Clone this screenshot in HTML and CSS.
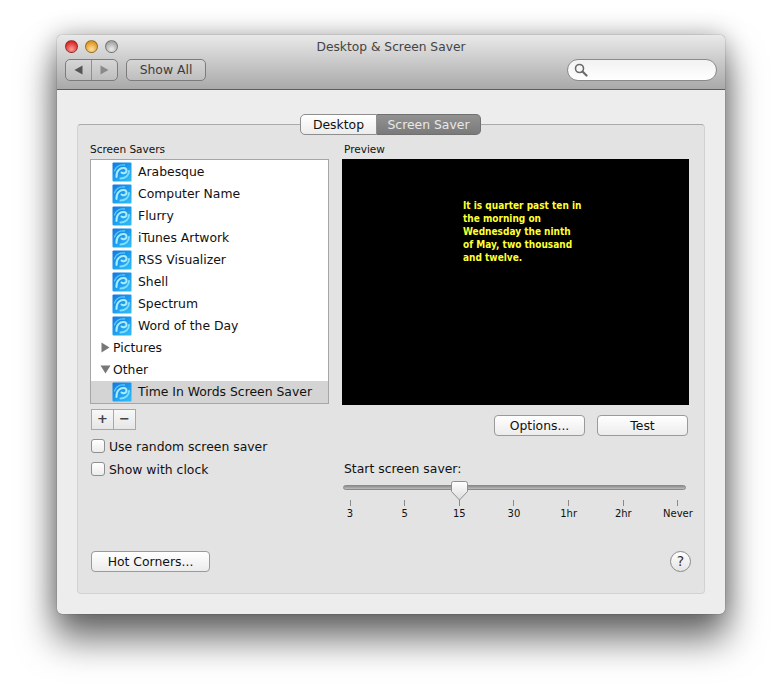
FILE: index.html
```html
<!DOCTYPE html>
<html>
<head>
  <meta name="viewport" content="width=device-width, initial-scale=1">
  <title>Desktop &amp; Screen Saver</title>
  <link rel="stylesheet" href="styles.css">
</head>
<body>
  <svg class="defs" width="0" height="0">
    <defs>
      <linearGradient id="iconBg" x1="0" y1="0" x2="0.8" y2="1">
        <stop offset="0" stop-color="#1478e0"/>
        <stop offset="0.5" stop-color="#1a98ee"/>
        <stop offset="1" stop-color="#30b8f6"/>
      </linearGradient>
      <symbol id="saver" viewBox="0 0 20 20">
        <rect x="0.500" y="0.500" width="19" height="19" rx="1" fill="url(#iconBg)"/>
        <path d="M4.500 15C4 9 8 5.500 12 6C15 6.400 15.500 10 12.500 11C11 11.500 10 11 9.500 10.500" fill="none" stroke="#a8ecff" stroke-width="2" stroke-linecap="round"/>
        <path d="M17 9C17 13.500 13 16.500 8.500 16.500" fill="none" stroke="#7fdffc" stroke-width="2" stroke-linecap="round"/>
        <path d="M2.500 9C4 4.500 8 2.500 12.500 3" fill="none" stroke="#5cc8f8" stroke-width="1.300" stroke-linecap="round"/>
      </symbol>
    </defs>
  </svg>

  <div class="window">
    <div class="titlebar">
      <div class="title-row">
        <div class="lights">
          <span class="light red"></span>
          <span class="light yellow"></span>
          <span class="light gray"></span>
        </div>
        <div class="title">Desktop &amp; Screen Saver</div>
      </div>
      <div class="toolbar">
        <div class="nav">
          <span class="nav-btn"><svg width="9" height="10" viewBox="0 0 9 10"><path d="M0.500 5L8.500 0.500V9.500Z" fill="#555"/></svg></span>
          <span class="nav-btn"><svg width="9" height="10" viewBox="0 0 9 10"><path d="M8.500 5L0.500 0.500V9.500Z" fill="#8a8a8a"/></svg></span>
        </div>
        <div class="show-all">Show All</div>
        <div class="search">
          <svg width="14" height="14" viewBox="0 0 14 14"><circle cx="5.500" cy="5.500" r="4" fill="none" stroke="#6a6a6a" stroke-width="1.600"/><path d="M8.500 8.500L12.500 12.500" stroke="#6a6a6a" stroke-width="2.200" stroke-linecap="round"/></svg>
        </div>
      </div>
    </div>

    <div class="content">
      <div class="panel">
        <div class="tabs">
          <div class="tab">Desktop</div>
          <div class="tab active">Screen Saver</div>
        </div>

        <div class="columns">
          <div class="left">
            <div class="small-label">Screen Savers</div>
            <ul class="list">
              <li class="row"><svg class="icon"><use href="#saver"/></svg>Arabesque</li>
              <li class="row"><svg class="icon"><use href="#saver"/></svg>Computer Name</li>
              <li class="row"><svg class="icon"><use href="#saver"/></svg>Flurry</li>
              <li class="row"><svg class="icon"><use href="#saver"/></svg>iTunes Artwork</li>
              <li class="row"><svg class="icon"><use href="#saver"/></svg>RSS Visualizer</li>
              <li class="row"><svg class="icon"><use href="#saver"/></svg>Shell</li>
              <li class="row"><svg class="icon"><use href="#saver"/></svg>Spectrum</li>
              <li class="row"><svg class="icon"><use href="#saver"/></svg>Word of the Day</li>
              <li class="row group"><svg class="arrow" width="9" height="11" viewBox="0 0 9 11"><path d="M0.500 0.500L8.500 5.500L0.500 10.500Z" fill="#777"/></svg>Pictures</li>
              <li class="row group"><svg class="arrow" width="11" height="9" viewBox="0 0 11 9"><path d="M0.500 0.500H10.500L5.500 8.500Z" fill="#777"/></svg>Other</li>
              <li class="row selected"><svg class="icon"><use href="#saver"/></svg>Time In Words Screen Saver</li>
            </ul>
            <div class="plus-minus">
              <span class="pm">+</span>
              <span class="pm">&minus;</span>
            </div>
            <label class="check first"><span class="box"></span>Use random screen saver</label>
            <label class="check"><span class="box"></span>Show with clock</label>
          </div>

          <div class="right">
            <div class="small-label preview-label">Preview</div>
            <div class="preview">
              <div class="words">It is quarter past ten in<br>the morning on<br>Wednesday the ninth<br>of May, two thousand<br>and twelve.</div>
            </div>
            <div class="actions">
              <div class="btn">Options...</div>
              <div class="btn">Test</div>
            </div>
            <div class="start-label">Start screen saver:</div>
            <div class="slider">
              <div class="track"></div>
              <svg class="thumb" width="17" height="20" viewBox="0 0 17 20">
                <defs><linearGradient id="thumbBg" x1="0" y1="0" x2="0" y2="1"><stop offset="0" stop-color="#fff"/><stop offset="1" stop-color="#dcdcdc"/></linearGradient></defs>
                <path d="M2.500 0.500H14.500Q16.500 0.500 16.500 2.500V10.500L8.500 19L0.500 10.500V2.500Q0.500 0.500 2.500 0.500Z" fill="url(#thumbBg)" stroke="#8f8f8f"/>
              </svg>
            </div>
            <div class="ticks">
              <div class="tick">3</div>
              <div class="tick">5</div>
              <div class="tick">15</div>
              <div class="tick">30</div>
              <div class="tick">1hr</div>
              <div class="tick">2hr</div>
              <div class="tick">Never</div>
            </div>
          </div>
        </div>

        <div class="footer">
          <div class="btn hot">Hot Corners...</div>
          <div class="help">?</div>
        </div>
      </div>
    </div>
  </div>
</body>
</html>
```

FILE: styles.css
```css
body {
  box-sizing: border-box;
  min-height: 693px;
  margin: 0;
  padding: 35px 0 0 57px;
  background: #fff;
  font-family: "DejaVu Sans", Verdana, sans-serif;
  font-size: 12.4px;
  color: #111;
}
.defs {
  position: absolute;
}
.window {
  box-sizing: border-box;
  width: 668px;
  height: 579px;
  border-radius: 5px;
  background: #ededed;
  box-shadow: 0 0 1px rgba(0,0,0,.7), 0 24px 36px 2px rgba(0,0,0,.55), 0 0 26px rgba(0,0,0,.28);
}

/* title bar */
.titlebar {
  box-sizing: border-box;
  height: 55px;
  padding: 0 8px;
  border-radius: 5px 5px 0 0;
  border-bottom: 1px solid #5e5e5e;
  background: linear-gradient(#e9e9e9, #a9a9a9);
}
.title-row {
  display: grid;
  grid-template-columns: 1fr auto 1fr;
  align-items: center;
  height: 23px;
}
.lights {
  display: flex;
  gap: 7px;
}
.light {
  width: 13px;
  height: 13px;
  border-radius: 50%;
  box-sizing: border-box;
  border: 1px solid rgba(0,0,0,.35);
}
.red { background: radial-gradient(circle at 50% 75%, #ff9a98, #d92f2c 70%); }
.yellow { background: radial-gradient(circle at 50% 75%, #ffe0a0, #e09a26 70%); }
.gray { background: radial-gradient(circle at 50% 75%, #ececec, #a8a8a8 70%); }
.title {
  font-size: 12.25px;
  color: #444;
}
.toolbar {
  display: flex;
  align-items: center;
  height: 22px;
  margin-top: 1px;
}
.nav {
  display: flex;
  box-sizing: border-box;
  width: 53px;
  height: 22px;
  border: 1px solid #7c7c7c;
  border-radius: 5px;
  background: linear-gradient(#d6d6d6, #bebebe);
}
.nav-btn {
  flex: 1;
  display: flex;
  align-items: center;
  justify-content: center;
}
.nav-btn + .nav-btn {
  border-left: 1px solid #8f8f8f;
}
.show-all {
  box-sizing: border-box;
  width: 80px;
  height: 22px;
  margin-left: 8px;
  border: 1px solid #7c7c7c;
  border-radius: 5px;
  background: linear-gradient(#d6d6d6, #bebebe);
  color: #3c3c3c;
  text-align: center;
  line-height: 20px;
}
.search {
  display: flex;
  align-items: center;
  box-sizing: border-box;
  width: 150px;
  height: 22px;
  margin-left: auto;
  padding-left: 6px;
  border: 1px solid #8a8a8a;
  border-radius: 11px;
  background: linear-gradient(#f2f2f2, #fff);
}

/* content */
.content {
  padding: 34px 20px 0;
}
.panel {
  box-sizing: border-box;
  height: 470px;
  padding: 0 12px;
  border: 1px solid #d2d2d2;
  border-top-color: #aaa;
  border-radius: 4px;
  background: #e3e3e3;
}
.tabs {
  display: flex;
  justify-content: center;
  height: 21px;
  margin: -11px 0 0 -1px;
}
.tab {
  box-sizing: border-box;
  width: 77px;
  border: 1px solid #8e8e8e;
  border-radius: 5px 0 0 5px;
  background: linear-gradient(#fff, #ececec);
  text-align: center;
  line-height: 19px;
}
.tab.active {
  width: 104px;
  border-radius: 0 5px 5px 0;
  border-left: 0;
  border-color: #707070;
  background: linear-gradient(#929292, #7a7a7a);
  color: #e8e8e8;
}
.columns {
  display: grid;
  grid-template-columns: 239px 347px;
  column-gap: 13px;
}
.small-label {
  box-sizing: border-box;
  height: 24px;
  padding-top: 8px;
  font-size: 10.5px;
  line-height: 13px;
}
.preview-label {
  padding-left: 2px;
}
.list {
  box-sizing: border-box;
  height: 245px;
  margin: 0;
  padding: 1px 0 0;
  list-style: none;
  border: 1px solid #a6a6a6;
  background: #fff;
}
.row {
  box-sizing: border-box;
  display: flex;
  align-items: center;
  height: 22px;
  padding: 0 0 2px 21px;
}
.icon {
  width: 20px;
  height: 20px;
  margin: 2px 6px 0 0;
}
.row.group {
  padding-left: 9px;
}
.arrow {
  flex: 0 0 11px;
  margin-right: 2px;
}
.row.selected {
  background: #d4d4d4;
}

.plus-minus {
  display: flex;
  box-sizing: border-box;
  width: 45px;
  height: 21px;
  margin: 5px 0 0 1px;
  border: 1px solid #a8a8a8;
  background: linear-gradient(#f8f8f8, #e6e6e6);
}
.pm {
  flex: 1;
  text-align: center;
  font-weight: bold;
  font-size: 13px;
  line-height: 18px;
  color: #444;
}
.pm + .pm {
  border-left: 1px solid #a8a8a8;
}
.check {
  display: flex;
  align-items: center;
  height: 14px;
  margin: 9px 0 0 1px;
}
.box {
  box-sizing: border-box;
  width: 14px;
  height: 14px;
  margin-right: 4px;
  border: 1px solid #8f8f8f;
  border-radius: 3px;
  background: linear-gradient(#fff, #ececec);
}

.preview {
  box-sizing: border-box;
  height: 246px;
  padding: 40px 0 0 121px;
  background: #000;
}
.words {
  font-size: 10px;
  font-stretch: condensed;
  font-weight: bold;
  line-height: 13px;
  color: #ffff33;
}
.actions {
  display: flex;
  justify-content: flex-end;
  gap: 12px;
  margin: 10px 1px 0 0;
}
.btn {
  box-sizing: border-box;
  width: 91px;
  height: 21px;
  border: 1px solid #9a9a9a;
  border-radius: 4px;
  background: linear-gradient(#fff, #ececec);
  text-align: center;
  line-height: 19px;
}
.start-label {
  height: 16px;
  margin: 25px 0 0 2px;
  line-height: 16px;
}
.slider {
  position: relative;
  height: 5px;
  margin: 8px 3px 0 1px;
}
.track {
  box-sizing: border-box;
  height: 5px;
  border: 1px solid #8a8a8a;
  border-radius: 3px;
  background: linear-gradient(#8e8e8e, #bdbdbd);
}
.thumb {
  position: absolute;
  left: 108px;
  top: -4px;
}
.ticks {
  display: flex;
  justify-content: space-between;
  width: 348px;
  margin: 10px 0 0 -2px;
}
.tick {
  display: flex;
  flex-direction: column;
  align-items: center;
  width: 20px;
  font-size: 10px;
  line-height: 13px;
  white-space: nowrap;
}
.tick::before {
  content: "";
  width: 1px;
  height: 6px;
  margin-bottom: 1px;
  background: #8a8a8a;
}

.footer {
  display: flex;
  justify-content: space-between;
  align-items: center;
  margin: 31px 0 0 1px;
  padding-right: 1px;
}
.btn.hot {
  width: 119px;
}
.help {
  box-sizing: border-box;
  width: 21px;
  height: 21px;
  border: 1px solid #8a8a8a;
  border-radius: 50%;
  background: linear-gradient(#fff, #e4e4e4);
  font-size: 14px;
  line-height: 19px;
  text-align: center;
  color: #333;
}
```
